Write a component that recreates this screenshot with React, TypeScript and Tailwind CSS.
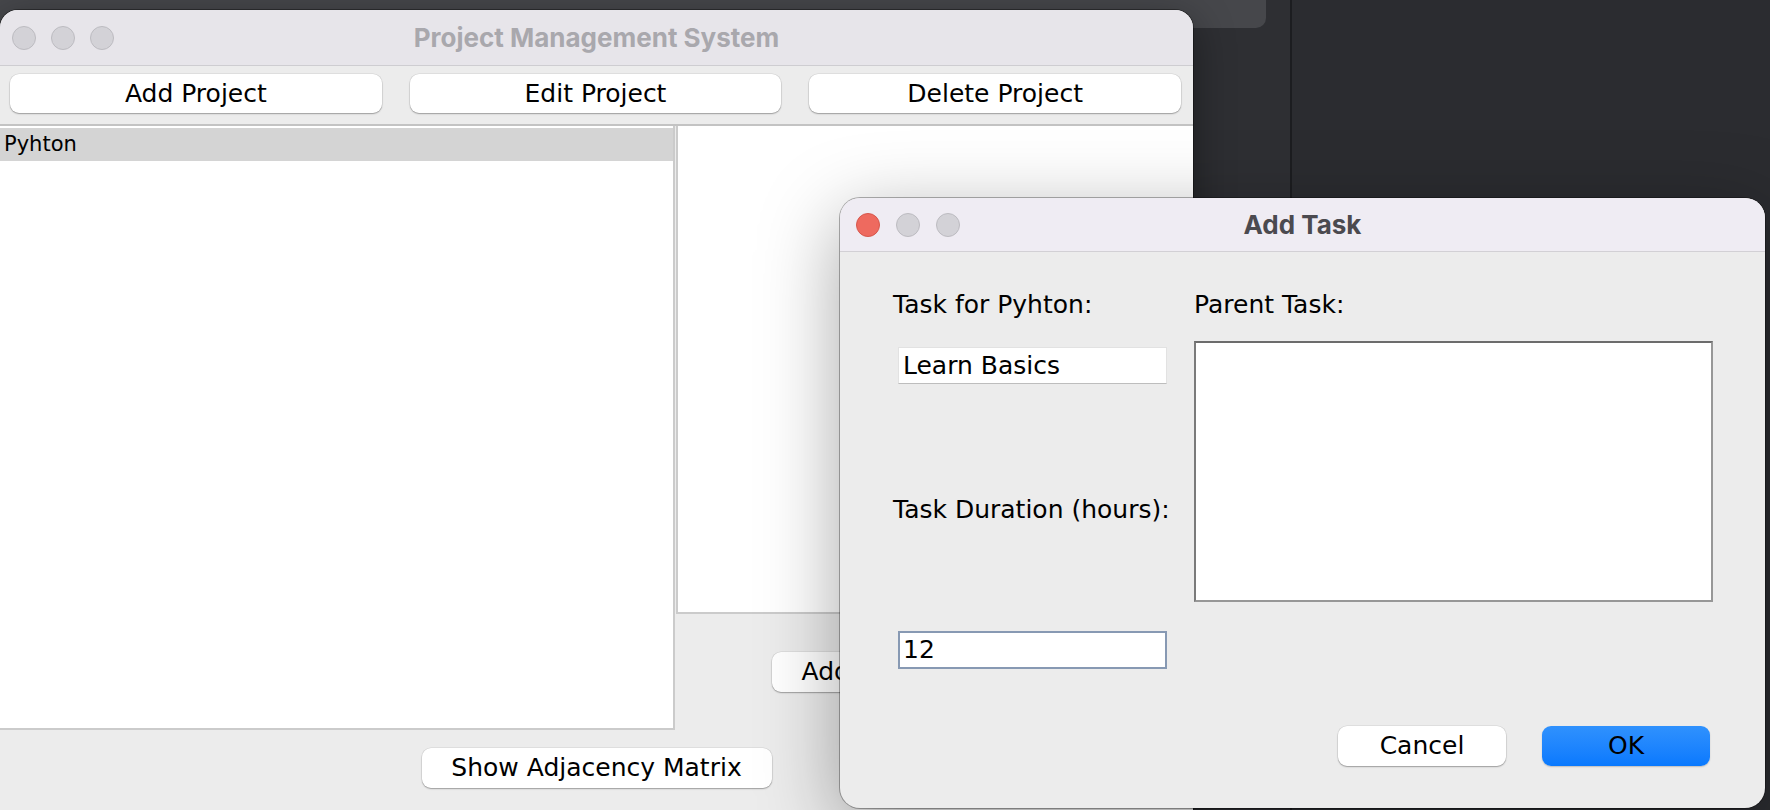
import React from 'react'

const ui = "font-['DejaVu_Sans','Liberation_Sans',sans-serif]"
const sys = "font-['Inter','Liberation_Sans',sans-serif]"

function Lights({ active }: { active?: boolean }) {
  return (
    <div className="flex items-center gap-[15px]">
      <span
        className={
          active
            ? 'w-[24px] h-[24px] rounded-full bg-[#ee6a5f] border border-[#d6574c]'
            : 'w-[24px] h-[24px] rounded-full bg-[#d3d2d7] border border-[#bcbbc0]'
        }
      />
      <span className="w-[24px] h-[24px] rounded-full bg-[#d3d2d7] border border-[#bcbbc0]" />
      <span className="w-[24px] h-[24px] rounded-full bg-[#d3d2d7] border border-[#bcbbc0]" />
    </div>
  )
}

function MacButton({ label, className }: { label: string; className?: string }) {
  return (
    <button
      className={`h-[39px] bg-white rounded-[9px] text-[25px] text-black shadow-[0_1px_1.5px_rgba(0,0,0,0.3),0_0_0_0.5px_rgba(0,0,0,0.1)] ${className ?? ''}`}
    >
      {label}
    </button>
  )
}

export default function App() {
  return (
    <div className={`relative w-[1770px] h-[810px] overflow-hidden flex ${ui}`}>
      {/* desktop behind the windows */}
      <div className="w-[1290px] h-full bg-[#2e2f33] flex flex-col">
        <div className="w-[1266px] h-[28px] bg-[#46474b] rounded-br-[10px]" />
      </div>
      <div className="w-[2px] h-full bg-[#1c1d20]" />
      <div className="flex-1 h-full bg-[#2b2c30]" />

      {/* main window */}
      <div className="absolute left-0 top-[10px] w-[1193px] h-[800px] rounded-t-[18px] overflow-hidden flex flex-col bg-[#ececec] shadow-[0_0_0_1px_rgba(0,0,0,0.35),0_10px_40px_rgba(0,0,0,0.4)]">
        <div className="h-[56px] shrink-0 bg-[#e7e5ea] border-b border-[#cecdd1] grid grid-cols-[1fr_auto_1fr] items-center pl-[12px] pr-[12px]">
          <Lights />
          <span className={`${sys} font-bold text-[26px] text-[#a9a8ad]`}>Project Management System</span>
          <span />
        </div>

        <div className="h-[58px] shrink-0 grid grid-cols-3 gap-[28px] pl-[10px] pr-[12px] pt-[8px]">
          <MacButton label="Add Project" />
          <MacButton label="Edit Project" />
          <MacButton label="Delete Project" />
        </div>

        <div className="h-[606px] shrink-0 flex border-t-2 border-[#c3c3c3]">
          <div className="w-[675px] h-full bg-white border-r-2 border-b-2 border-[#cbcbcb] pt-[2px]">
            <div className="h-[33px] bg-[#d4d4d4] flex items-center pl-[4px] text-[21px] text-black">Pyhton</div>
          </div>
          <div className="flex-1 ml-[1px] flex flex-col">
            <div className="h-[488px] bg-white border-l-2 border-b-2 border-[#cbcbcb]" />
            <div className="flex justify-center pt-[38px]">
              <button className="w-[326px] h-[40px] bg-white rounded-[9px] text-[25px] text-black text-left pl-[30px] shadow-[0_1px_1.5px_rgba(0,0,0,0.3),0_0_0_0.5px_rgba(0,0,0,0.1)]">
                Add Task
              </button>
            </div>
          </div>
        </div>

        <div className="flex justify-center pt-[18px]">
          <MacButton label="Show Adjacency Matrix" className="w-[350px] h-[40px]" />
        </div>
      </div>

      {/* Add Task dialog */}
      <div className="absolute left-[840px] top-[198px] w-[925px] h-[610px] rounded-[20px] overflow-hidden flex flex-col bg-[#ececec] shadow-[0_0_0_1px_rgba(0,0,0,0.3),0_20px_80px_rgba(0,0,0,0.35)]">
        <div className="h-[54px] shrink-0 bg-[#efecf3] border-b border-[#d2d0d5] grid grid-cols-[1fr_auto_1fr] items-center px-[16px]">
          <div className="[&>div]:gap-[16px]">
            <Lights active />
          </div>
          <span className={`${sys} font-bold text-[26px] text-[#4b4a4f]`}>Add Task</span>
          <span />
        </div>

        <div className="flex-1 text-[25px] text-black">
          <div className="flex pt-[38px] pl-[53px]">
            <div className="w-[301px] flex flex-col">
              <span className="leading-[30px]">Task for Pyhton:</span>
              <div className="mt-[27px] ml-[5px] w-[269px] h-[37px] bg-white border border-[#e2e2e2] border-b-[#bdbdbd] flex items-center pl-[4px]">
                Learn Basics
              </div>
              <span className="mt-[111px] leading-[30px]">Task Duration (hours):</span>
              <div className="mt-[106px] ml-[5px] w-[269px] h-[38px] bg-white border-2 border-[#8799b3] flex items-center pl-[3px]">
                12
              </div>
            </div>
            <div className="flex flex-col">
              <span className="leading-[30px]">Parent Task:</span>
              <div className="mt-[21px] w-[519px] h-[261px] bg-white border-2 border-[#979797] border-t-[#6c6c6c] border-l-[#7a7a7a]" />
            </div>
          </div>

          <div className="flex justify-end gap-[36px] pr-[55px] mt-[57px]">
            <button className="w-[168px] h-[40px] bg-white rounded-[9px] text-black shadow-[0_1px_1.5px_rgba(0,0,0,0.3),0_0_0_0.5px_rgba(0,0,0,0.1)]">
              Cancel
            </button>
            <button className="w-[168px] h-[40px] rounded-[9px] text-black bg-gradient-to-b from-[#2f91fd] to-[#0879fe] shadow-[0_1px_1.5px_rgba(0,0,0,0.2)]">
              OK
            </button>
          </div>
        </div>
      </div>
    </div>
  )
}
